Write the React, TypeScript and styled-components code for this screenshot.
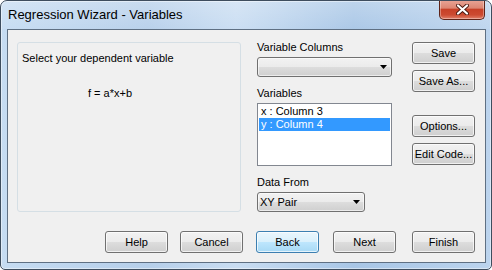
import React from 'react';
import styled, { createGlobalStyle } from 'styled-components';

const GlobalStyle = createGlobalStyle`
  html, body {
    margin: 0;
    padding: 0;
    background: #ffffff;
  }
  body {
    font-family: 'Liberation Sans', Arial, sans-serif;
    font-size: 11px;
    color: #000000;
  }
  * {
    box-sizing: border-box;
  }
`;

const Window = styled.div`
  width: 492px;
  height: 270px;
  display: flex;
  flex-direction: column;
  border: 1px solid #3e4d5e;
  border-radius: 7px 7px 5px 5px;
  overflow: hidden;
  background: linear-gradient(
    90deg,
    #c6dcf2 0%,
    #b6cfea 30%,
    #c9ddf2 48%,
    #a8c6e6 72%,
    #bcd4ee 100%
  );
  box-shadow: inset 0 0 0 1px rgba(255, 255, 255, 0.45);
`;

const TitleBar = styled.div`
  height: 28px;
  flex: none;
  display: flex;
  align-items: flex-start;
  padding-left: 7px;
  background: linear-gradient(
    180deg,
    rgba(255, 255, 255, 0.25) 0%,
    rgba(255, 255, 255, 0.05) 100%
  );
`;

const Title = styled.div`
  font-family: 'Liberation Sans', Arial, sans-serif;
  font-size: 13px;
  line-height: 28px;
  color: #000000;
`;

const CloseButton = styled.div`
  margin-left: auto;
  margin-right: 6px;
  margin-top: -1px;
  width: 46px;
  height: 20px;
  display: flex;
  align-items: center;
  justify-content: center;
  border: 1px solid #5e2419;
  border-top: none;
  border-radius: 0 0 5px 5px;
  background: linear-gradient(
    180deg,
    #e8a597 0%,
    #dc8673 42%,
    #c74128 50%,
    #cc4a31 78%,
    #e0806a 100%
  );
  box-shadow: inset 0 0 0 1px rgba(255, 255, 255, 0.35);
`;

const Client = styled.div`
  flex: 1;
  margin: 0 5px 6px 6px;
  border: 1px solid #5f7083;
  background: #f0f0f0;
  display: flex;
  flex-direction: column;
  padding: 10px 10px 9px 9px;
`;

const Main = styled.div`
  display: flex;
  align-items: flex-start;
`;

const GroupBox = styled.div`
  margin-top: 2px;
  width: 224px;
  height: 170px;
  border: 1px solid #d5dfe5;
  border-radius: 3px;
  padding: 9px 4px;
`;

const Prompt = styled.div`
  line-height: 13px;
`;

const Formula = styled.div`
  line-height: 13px;
  margin-top: 22px;
  padding-left: 66px;
`;

const Column = styled.div`
  margin-left: 16px;
  width: 135px;
  display: flex;
  flex-direction: column;
`;

const Label = styled.div<{ $top: number }>`
  line-height: 13px;
  margin-top: ${(p) => p.$top}px;
  margin-bottom: 3px;
`;

const Combo = styled.div<{ $width: number }>`
  width: ${(p) => p.$width}px;
  height: 20px;
  display: flex;
  align-items: center;
  padding: 0 4px 0 2px;
  border: 1px solid #707070;
  border-radius: 3px;
  background: linear-gradient(180deg, #f2f2f2 0%, #ebebeb 50%, #dddddd 50%, #cfcfcf 100%);
  box-shadow: inset 0 0 0 1px rgba(255, 255, 255, 0.6);
  line-height: 13px;
`;

const ComboText = styled.span`
  flex: 1;
`;

const ListBox = styled.div`
  height: 63px;
  border: 1px solid #828790;
  background: #ffffff;
  padding: 1px;
`;

const ListItem = styled.div<{ $selected?: boolean }>`
  height: 13px;
  line-height: 13px;
  padding-left: 2px;
  background: ${(p) => (p.$selected ? '#3399ff' : 'transparent')};
  color: ${(p) => (p.$selected ? '#ffffff' : '#000000')};
`;

const ButtonColumn = styled.div`
  margin-left: 20px;
  margin-top: 2px;
  display: flex;
  flex-direction: column;
`;

const Button = styled.div<{ $default?: boolean; $top?: number; $left?: number }>`
  width: 63px;
  height: 22px;
  margin-top: ${(p) => p.$top ?? 0}px;
  margin-left: ${(p) => p.$left ?? 0}px;
  display: flex;
  align-items: center;
  justify-content: center;
  border: 1px solid ${(p) => (p.$default ? '#3c7fb1' : '#707070')};
  border-radius: 3px;
  background: ${(p) =>
    p.$default
      ? 'linear-gradient(180deg, #eaf6fd 0%, #d9f0fc 50%, #bee6fd 50%, #a7d9f5 100%)'
      : 'linear-gradient(180deg, #f2f2f2 0%, #ebebeb 50%, #dddddd 50%, #cfcfcf 100%)'};
  box-shadow: inset 0 0 0 1px rgba(255, 255, 255, 0.7);
  line-height: 13px;
  white-space: nowrap;
`;

const Spacer = styled.div`
  flex: 1;
`;

const Footer = styled.div`
  display: flex;
  justify-content: flex-end;
`;

const Arrow = () => (
  <svg width="7" height="4" viewBox="0 0 7 4">
    <path d="M0 0h7L3.5 4z" fill="#000000" />
  </svg>
);

const CloseGlyph = () => (
  <svg width="13" height="11" viewBox="0 0 13 11">
    <path
      d="M2 1.5L11 9.5M11 1.5L2 9.5"
      stroke="#4a1a12"
      strokeWidth="4"
      strokeLinecap="round"
    />
    <path
      d="M2 1.5L11 9.5M11 1.5L2 9.5"
      stroke="#ffffff"
      strokeWidth="2.2"
      strokeLinecap="round"
    />
  </svg>
);

const variables = [
  { id: 'x', text: 'x : Column 3' },
  { id: 'y', text: 'y : Column 4' },
];

const footerButtons = [
  { text: 'Help', space: 0 },
  { text: 'Cancel', space: 12 },
  { text: 'Back', space: 13, primary: true },
  { text: 'Next', space: 14 },
  { text: 'Finish', space: 16 },
];

const App = () => {
  return (
    <>
      <GlobalStyle />
      <Window>
        <TitleBar>
          <Title>Regression Wizard - Variables</Title>
          <CloseButton>
            <CloseGlyph />
          </CloseButton>
        </TitleBar>
        <Client>
          <Main>
            <GroupBox>
              <Prompt>Select your dependent variable</Prompt>
              <Formula>f = a*x+b</Formula>
            </GroupBox>
            <Column>
              <Label $top={1}>Variable Columns</Label>
              <Combo $width={135}>
                <ComboText />
                <Arrow />
              </Combo>
              <Label $top={10}>Variables</Label>
              <ListBox>
                {variables.map((v) => (
                  <ListItem key={v.id} $selected={v.id === 'y'}>
                    {v.text}
                  </ListItem>
                ))}
              </ListBox>
              <Label $top={10}>Data From</Label>
              <Combo $width={108}>
                <ComboText>XY Pair</ComboText>
                <Arrow />
              </Combo>
            </Column>
            <ButtonColumn>
              <Button>Save</Button>
              <Button $top={6}>Save As...</Button>
              <Button $top={23}>Options...</Button>
              <Button $top={6}>Edit Code...</Button>
            </ButtonColumn>
          </Main>
          <Spacer />
          <Footer>
            {footerButtons.map((b) => (
              <Button key={b.text} $left={b.space} $default={b.primary}>
                {b.text}
              </Button>
            ))}
          </Footer>
        </Client>
      </Window>
    </>
  );
};

export default App;
